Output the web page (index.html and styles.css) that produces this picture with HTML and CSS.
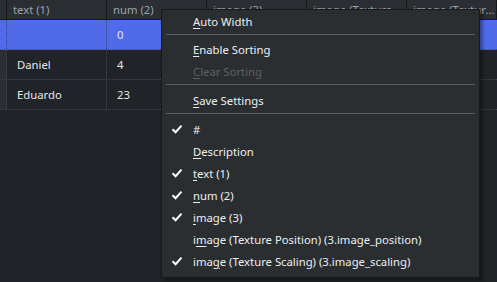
FILE: index.html
```html
<!DOCTYPE html>
<html lang="en">

<head>
    <meta charset="UTF-8">
    <title>Table</title>
    <link rel="stylesheet" href="styles.css">
</head>

<body>
    <div class="view">
        <div class="grid">
            <div class="row head">
                <div class="cell c0"></div>
                <div class="cell">text (1)</div>
                <div class="cell">num (2)</div>
                <div class="cell">image (3)</div>
                <div class="cell">image (Texture Position)</div>
                <div class="cell last">image (Texture Scaling)</div>
            </div>
            <div class="row sel">
                <div class="cell c0"></div>
                <div class="cell"></div>
                <div class="cell">0</div>
                <div class="cell"></div>
                <div class="cell"></div>
                <div class="cell last"></div>
            </div>
            <div class="row">
                <div class="cell c0"></div>
                <div class="cell">Daniel</div>
                <div class="cell">4</div>
                <div class="cell"></div>
                <div class="cell"></div>
                <div class="cell last"></div>
            </div>
            <div class="row">
                <div class="cell c0"></div>
                <div class="cell">Eduardo</div>
                <div class="cell">23</div>
                <div class="cell"></div>
                <div class="cell"></div>
                <div class="cell last"></div>
            </div>
        </div>
    </div>

    <div class="menu">
        <div class="item"><span class="check"></span><span><u>A</u>uto Width</span></div>
        <div class="sep first"></div>
        <div class="item"><span class="check"></span><span><u>E</u>nable Sorting</span></div>
        <div class="item off"><span class="check"></span><span><u>C</u>lear Sorting</span></div>
        <div class="sep"></div>
        <div class="item"><span class="check"></span><span><u>S</u>ave Settings</span></div>
        <div class="sep"></div>
        <div class="item"><span class="check"><svg viewBox="0 0 12 10"><path d="M1.5 5.2 L4.6 8.2 L10.5 1.6"/></svg></span><span>#</span></div>
        <div class="item"><span class="check"></span><span><u>D</u>escription</span></div>
        <div class="item"><span class="check"><svg viewBox="0 0 12 10"><path d="M1.5 5.2 L4.6 8.2 L10.5 1.6"/></svg></span><span><u>t</u>ext (1)</span></div>
        <div class="item"><span class="check"><svg viewBox="0 0 12 10"><path d="M1.5 5.2 L4.6 8.2 L10.5 1.6"/></svg></span><span><u>n</u>um (2)</span></div>
        <div class="item"><span class="check"><svg viewBox="0 0 12 10"><path d="M1.5 5.2 L4.6 8.2 L10.5 1.6"/></svg></span><span><u>i</u>mage (3)</span></div>
        <div class="item"><span class="check"></span><span>i<u>m</u>age (Texture Position) (3.image_position)</span></div>
        <div class="item"><span class="check"><svg viewBox="0 0 12 10"><path d="M1.5 5.2 L4.6 8.2 L10.5 1.6"/></svg></span><span>ima<u>g</u>e (Texture Scaling) (3.image_scaling)</span></div>
    </div>
</body>

</html>
```

FILE: styles.css
```css
* {
    margin: 0;
    padding: 0;
    box-sizing: border-box;
}

body {
    width: 497px;
    height: 282px;
    overflow: hidden;
    background-color: #202327;
    font-family: "Noto Sans", "Open Sans", sans-serif;
    font-size: 11.3px;
    color: #e6e8ea;
    position: relative;
}

.view {
    width: 497px;
    overflow: hidden;
}

.grid {
    display: flex;
    flex-direction: column;
}

.row {
    display: flex;
    height: 30px;
    border-bottom: 1px dotted #44474c;
}

.row .cell {
    width: 100px;
    flex-shrink: 0;
    padding-left: 10px;
    line-height: 29px;
    border-right: 1px dotted #44474c;
    white-space: nowrap;
    overflow: hidden;
    text-overflow: ellipsis;
}

.row .last {
    flex: 1;
    width: auto;
    min-width: 0;
    border-right: none;
}

.row .c0 {
    width: 7px;
    padding: 0;
    background-color: #2b2e33;
}

.head {
    height: 20px;
    background-color: #2b2e33;
    border-bottom: 1px solid #16181b;
}

.head .cell {
    padding-left: 6px;
    line-height: 19px;
    color: #9ba3ad;
    border-right: 1px solid #16181b;
}

.sel {
    background-color: #4f6be9;
    border-bottom-color: #3a4c9c;
}

.sel .cell {
    border-right-color: #2d3c80;
}

.sel .c0 {
    background-color: #4f6be9;
}

.menu {
    position: absolute;
    left: 161px;
    top: 9px;
    width: 319px;
    height: 269px;
    background-color: #2b2e31;
    border: 1px solid #17191b;
    box-shadow: 3px 3px 3px rgba(0, 0, 0, .35);
    display: flex;
    flex-direction: column;
}

.item {
    display: flex;
    align-items: center;
    height: 22px;
    flex-shrink: 0;
    color: #eceef0;
    white-space: nowrap;
}

.item.off {
    color: #5d6166;
}

.item u {
    text-underline-offset: 2px;
}

.check {
    width: 31px;
    height: 22px;
    display: flex;
    align-items: center;
    padding-left: 9px;
}

.check svg {
    width: 12px;
    height: 10px;
    fill: none;
    stroke: #ffffff;
    stroke-width: 2;
}

.sep {
    height: 7px;
    flex-shrink: 0;
    padding-top: 2px;
    margin: 0 4px;
}

.sep.first {
    height: 6px;
}

.sep::after {
    content: "";
    display: block;
    height: 1px;
    background-color: #5c5f63;
}
```
